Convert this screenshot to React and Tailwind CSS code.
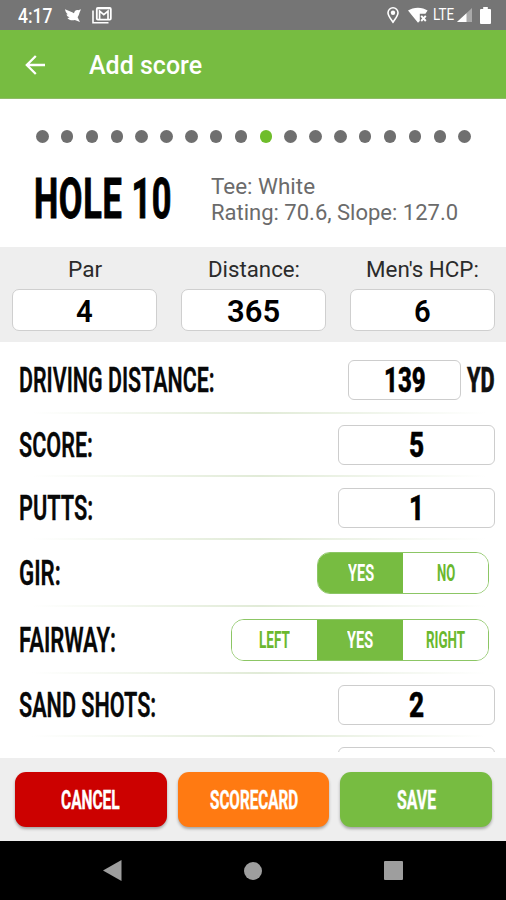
import React, { useLayoutEffect, useRef, useState } from 'react';

// Condensed display text: squeezes the glyphs so they fill the width of the box
const Condensed = ({ children, className = '' }) => {
  const boxRef = useRef(null);
  const textRef = useRef(null);
  const [scale, setScale] = useState(1);

  useLayoutEffect(() => {
    setScale(boxRef.current.clientWidth / textRef.current.offsetWidth);
  }, [children]);

  return (
    <span ref={boxRef} className={`block shrink-0 leading-none whitespace-nowrap ${className}`}>
      <span
        ref={textRef}
        className="inline-block origin-left align-top"
        style={{ transform: `scaleX(${scale})` }}
      >
        {children}
      </span>
    </span>
  );
};

const StatusBar = () => (
  <div className="flex h-[30px] shrink-0 items-center bg-[#757575] pr-[15px] pl-[18px] text-white">
    <Condensed className="w-[34px] pt-px text-[20px] font-medium">4:17</Condensed>
    <svg className="ml-[13px] h-[15px] w-[16px]" viewBox="0 0 16 15" fill="currentColor">
      <path d="M0 1.2 L7.2 4.2 L9 5.2 C9.6 2.6 11.6 1.4 13.2 2.2 L16 1.2 L14.6 4.4 C14.2 6 13.6 7.6 12.6 9.2 L15 14 L9.8 12 C6.6 13 3.8 11.6 2.4 10 L4.6 9.4 C2.8 8.6 1.8 7.6 1.4 6.4 L2.8 6.2 C1.2 4.8 .2 3 0 1.2 Z" />
    </svg>
    <svg className="ml-[11px] h-[17px] w-[20px]" viewBox="0 0 20 17" fill="none" stroke="currentColor">
      <path d="M1 3.5 V15.8 H16.5" strokeWidth="1.6" />
      <rect x="4.8" y="1" width="14" height="11.6" rx="1" strokeWidth="1.8" />
      <path d="M7.6 12 V4 L11.8 7.6 L16 4 V12" strokeWidth="1.7" />
      <path d="M5 1.6 H18.6" strokeWidth="1.4" />
    </svg>
    <div className="flex-1" />
    <svg className="h-[17px] w-[12px]" viewBox="0 0 12 17" fill="none" stroke="currentColor">
      <path d="M6 15.2 C3.4 11.4 1 8.8 1 5.8 A5 5 0 0 1 11 5.8 C11 8.8 8.6 11.4 6 15.2 Z" strokeWidth="1.6" />
      <circle cx="6" cy="5.8" r="2.2" fill="currentColor" stroke="none" />
    </svg>
    <svg className="ml-[9px] h-[16px] w-[20px]" viewBox="0 0 20 16" fill="currentColor">
      <path d="M0 3.6 C5 -.2 14.6 -.4 19.6 3.6 L17.4 6.8 H11.8 V14 L10 15.8 Z" />
      <path d="M13.2 8.8 L17.8 14 M17.8 8.8 L13.2 14" stroke="currentColor" strokeWidth="1.9" />
    </svg>
    <Condensed className="ml-[5px] w-[21px] text-[16px]">LTE</Condensed>
    <svg className="ml-[3px] h-[14px] w-[15px]" viewBox="0 0 15 14">
      <path d="M15 0 V14 H0 Z" fill="#a9a9a9" />
      <path d="M9.5 5.2 V14 H0 Z" fill="#fff" />
    </svg>
    <svg className="ml-[8px] h-[17px] w-[11px]" viewBox="0 0 11 17" fill="currentColor">
      <path d="M3.2 0 H7.8 V2 H10 Q11 2 11 3 V16 Q11 17 10 17 H1 Q0 17 0 16 V3 Q0 2 1 2 H3.2 Z" />
    </svg>
  </div>
);

const Header = () => (
  <header className="flex h-[69px] shrink-0 items-center border-b border-[#8fbb68] bg-[#77bc41] pt-px pl-[25px] text-white">
    <button aria-label="Back">
      <svg className="h-[20px] w-[21px]" viewBox="0 0 21 20" fill="none" stroke="currentColor" strokeWidth="2.3">
        <path d="M20 10 H2 M10.8 1 L1.8 10 L10.8 19" />
      </svg>
    </button>
    <h1 className="mt-px ml-[43px]">
      <Condensed className="w-[113px] text-[25px] font-medium">Add score</Condensed>
    </h1>
  </header>
);

const HolePager = ({ current, total = 18 }) => (
  <div className="flex justify-between pr-[35px] pl-[36px]">
    {Array.from({ length: total }, (_, i) => (
      <span
        key={i}
        className={`size-[12.5px] rounded-full ${i + 1 === current ? 'bg-[#6fbd2b]' : 'bg-[#6f6f6f]'}`}
      />
    ))}
  </div>
);

const holeInfo = [
  { label: 'Par', value: '4', labelWidth: 'w-[34px]', valueWidth: 'w-[17px]' },
  { label: 'Distance:', value: '365', labelWidth: 'w-[92px]', valueWidth: 'w-[53px]' },
  { label: "Men's HCP:", value: '6', labelWidth: 'w-[113px]', valueWidth: 'w-[17px]' },
];

const InfoCard = ({ label, value, labelWidth, valueWidth }) => (
  <div className="flex flex-1 flex-col items-center">
    <Condensed className={`text-[22px] text-[#2b2b2b] ${labelWidth}`}>{label}</Condensed>
    <div className="mt-[8px] flex h-[42px] w-full items-center justify-center rounded-[7px] border border-[#cfcfcf] bg-white pt-[2px]">
      <Condensed className={`text-[31px] font-semibold text-black ${valueWidth}`}>{value}</Condensed>
    </div>
  </div>
);

const Row = ({ label, labelWidth, className = 'h-[63px]', children }) => (
  <div className={`shrink-0 ${className}`}>
    <div className="flex h-full items-center justify-between pr-[11px] pl-[19px]">
      <Condensed
        className={`pt-px text-[35px] font-semibold text-[#080808] [-webkit-text-stroke:0.3px] ${labelWidth}`}
      >
        {label}
      </Condensed>
      {children}
    </div>
    <div className="-mt-px mr-[20px] ml-[32px] h-[2px] bg-linear-to-r from-transparent via-[#e1ebd7] to-transparent" />
  </div>
);

const ValueBox = ({ value, width = 'w-[157px]', valueWidth = 'w-[15px]' }) => (
  <div className={`flex h-[40px] items-center justify-center rounded-[6px] border border-[#cdcdcd] bg-white ${width}`}>
    <Condensed
      className={`pt-px text-[35px] font-extrabold text-black [-webkit-text-stroke:0.5px] ${valueWidth}`}
    >
      {value}
    </Condensed>
  </div>
);

const segmentWidths = { LEFT: 'w-[31px]', RIGHT: 'w-[39px]', YES: 'w-[26px]', NO: 'w-[18px]' };

const Segmented = ({ options, initial }) => {
  const [selected, setSelected] = useState(initial);

  return (
    <div className="mr-[6px] flex h-[42px] overflow-hidden rounded-[13px] border border-[#8cc665]">
      {options.map((option, i) => (
        <button
          key={option}
          onClick={() => setSelected(option)}
          className={`flex items-center justify-center ${i === 1 && options.length === 3 ? 'w-[86px]' : 'w-[85px]'} ${
            selected === option ? 'bg-[#77bc41] text-white' : 'bg-white text-[#6ab82e]'
          }`}
        >
          <Condensed className={`text-[24px] font-bold ${segmentWidths[option]}`}>{option}</Condensed>
        </button>
      ))}
    </div>
  );
};

const ActionButton = ({ label, color, labelWidth }) => (
  <button
    className={`flex h-[55px] flex-1 items-center justify-center rounded-[11px] text-white shadow-[0_2px_3px_rgba(0,0,0,0.3)] ${color}`}
  >
    <Condensed className={`pt-px text-[26px] font-bold [-webkit-text-stroke:0.4px] ${labelWidth}`}>{label}</Condensed>
  </button>
);

const NavBar = () => (
  <nav className="flex h-[59px] shrink-0 items-center justify-between bg-black pr-[103px] pl-[103px] text-[#9e9e9e]">
    <svg className="h-[21px] w-[19px]" viewBox="0 0 19 21" fill="currentColor">
      <path d="M18.5 0 V21 L0 10.5 Z" />
    </svg>
    <span className="size-[18px] rounded-full bg-[#9e9e9e]" />
    <span className="size-[19px] rounded-[1px] bg-[#9e9e9e]" />
  </nav>
);

export default function App() {
  return (
    <div className="flex h-[900px] w-[506px] flex-col overflow-hidden bg-white font-['Roboto',sans-serif]">
      <StatusBar />
      <Header />

      <section className="h-[148px] shrink-0 pt-[31px]">
        <HolePager current={10} />
        <div className="mt-[29px] flex pl-[34px]">
          <Condensed className="w-[138px] text-[55px] font-bold tracking-[1px] text-black [-webkit-text-stroke:1px]">
            HOLE 10
          </Condensed>
          <div className="ml-[39px] text-[#6b6b6b]">
            <Condensed className="mt-[4px] w-[104px] text-[22px]">Tee: White</Condensed>
            <Condensed className="mt-[4px] w-[247px] text-[22px]">Rating: 70.6, Slope: 127.0</Condensed>
          </div>
        </div>
      </section>

      <section className="flex h-[95px] shrink-0 gap-[24px] bg-[#eeeeee] pt-[12px] pr-[11px] pl-[12px]">
        {holeInfo.map((info) => (
          <InfoCard key={info.label} {...info} />
        ))}
      </section>

      <main className="flex h-[410px] shrink-0 flex-col overflow-hidden">
        <Row label="DRIVING DISTANCE:" labelWidth="w-[196px]" className="h-[71px] pt-[5px]">
          <div className="flex items-center">
            <ValueBox value="139" width="w-[113px]" valueWidth="w-[42px]" />
            <Condensed className="ml-[6px] w-[28px] pt-px text-[35px] font-extrabold text-[#111] [-webkit-text-stroke:0.5px]">
              YD
            </Condensed>
          </div>
        </Row>
        <Row label="SCORE:" labelWidth="w-[74px]">
          <ValueBox value="5" />
        </Row>
        <Row label="PUTTS:" labelWidth="w-[74px]">
          <ValueBox value="1" />
        </Row>
        <Row label="GIR:" labelWidth="w-[42px]" className="h-[67px]">
          <Segmented options={['YES', 'NO']} initial="YES" />
        </Row>
        <Row label="FAIRWAY:" labelWidth="w-[97px]" className="h-[67px]">
          <Segmented options={['LEFT', 'YES', 'RIGHT']} initial="YES" />
        </Row>
        <Row label="SAND SHOTS:" labelWidth="w-[137px]">
          <ValueBox value="2" />
        </Row>
        <div className="flex shrink-0 justify-end pt-[11px] pr-[11px]">
          <div className="h-[40px] w-[157px] rounded-[6px] border border-[#cdcdcd]" />
        </div>
      </main>

      <footer className="mt-[6px] flex h-[83px] shrink-0 gap-[11px] bg-[#eeeeee] pt-[14px] pr-[14px] pl-[15px]">
        <ActionButton label="CANCEL" color="bg-[#cc0100]" labelWidth="w-[59px]" />
        <ActionButton label="SCORECARD" color="bg-[#ff7a12]" labelWidth="w-[88px]" />
        <ActionButton label="SAVE" color="bg-[#77bc41]" labelWidth="w-[39px]" />
      </footer>

      <NavBar />
    </div>
  );
}
